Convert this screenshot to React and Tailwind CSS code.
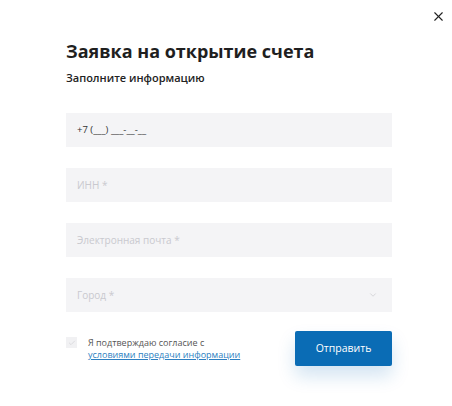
import { ChevronDown, Check, X } from "lucide-react";

const font = { fontFamily: '"Open Sans", "Noto Sans", sans-serif' };

function Field({ placeholder, value, select }) {
  return (
    <div className="flex h-[34px] items-center justify-between bg-[#f4f4f6] pl-[11px] pr-[14px]">
      {value ? (
        <span className="text-[9.5px] text-[#333]">{value}</span>
      ) : (
        <span className="text-[10px] text-[#c9c9cf]">{placeholder}</span>
      )}
      {select ? <ChevronDown size={10} strokeWidth={1.5} className="text-[#c3c3c9]" /> : null}
    </div>
  );
}

export default function App() {
  return (
    <div className="relative h-[406px] w-[452px] bg-white" style={font}>
      <button type="button" className="absolute right-[6px] top-[9px] text-[#222]">
        <X size={15} strokeWidth={1.8} />
      </button>

      <div className="w-[392px] pl-[66px] pt-[38px]">
        <h1 className="text-[18px] font-bold leading-[26px] text-[#1f1f1f]">
          Заявка на открытие счета
        </h1>
        <p className="mt-[7px] text-[11px] font-semibold leading-[14px] text-[#222]">Заполните информацию</p>

        <div className="mt-[28px] flex flex-col gap-[21px]">
          <Field value="+7 (___) ___-__-__" />
          <Field placeholder="ИНН *" />
          <Field placeholder="Электронная почта *" />
          <Field placeholder="Город *" select />
        </div>

        <div className="mt-[19px] flex items-start justify-between">
          <div className="flex items-start gap-[11px] pt-[6px]">
            <span className="grid h-[11px] w-[11px] place-items-center bg-[#f1f1f3]">
              <Check size={8} strokeWidth={2} className="text-[#d0d0d4]" />
            </span>
            <p className="text-[9px] leading-[12px] text-[#555]">
              Я подтверждаю согласие с
              <br />
              <a href="#" className="text-[#2d7fc1] underline">
                условиями передачи информации
              </a>
            </p>
          </div>
          <button
            type="button"
            className="h-[35px] w-[97px] rounded-[2px] bg-[#0a6cb5] text-[10.5px] font-medium text-white shadow-[0_10px_18px_rgba(10,108,181,0.18)]"
          >
            Отправить
          </button>
        </div>
      </div>
    </div>
  );
}
